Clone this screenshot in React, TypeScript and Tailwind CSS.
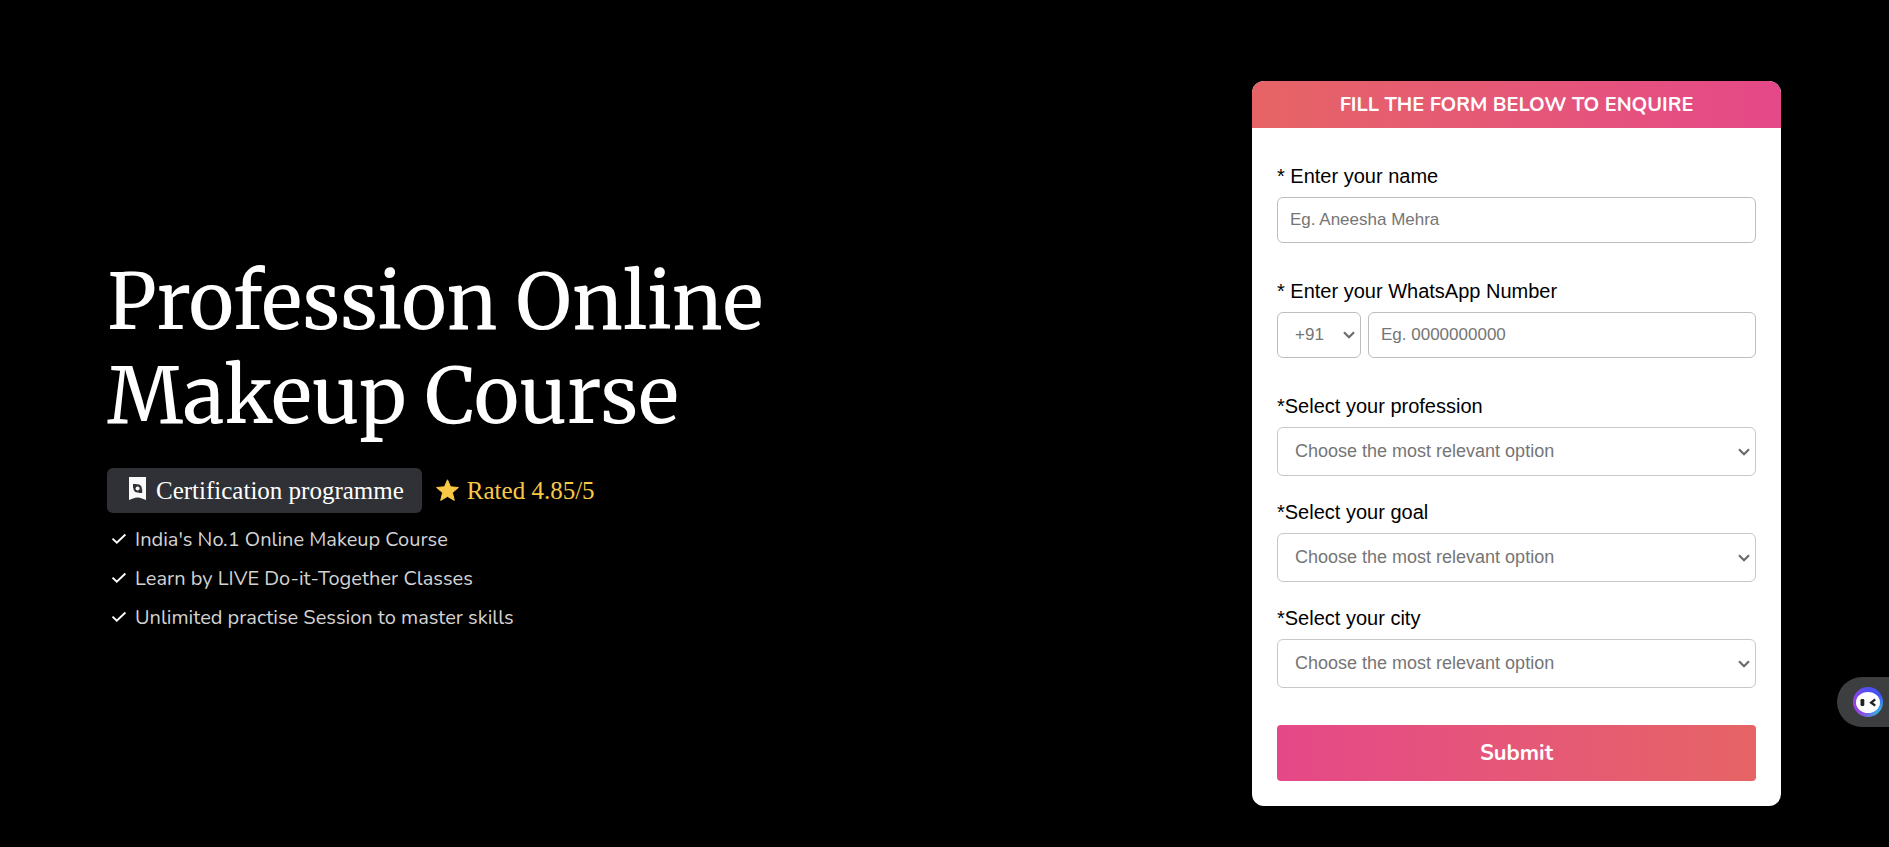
import type { ReactNode } from "react";

const benefits = [
  "India's No.1 Online Makeup Course",
  "Learn by LIVE Do-it-Together Classes",
  "Unlimited practise Session to master skills",
];

const selects = [
  { id: "profession", label: "*Select your profession", options: ["Student", "Working professional", "Makeup artist"] },
  { id: "goal", label: "*Select your goal", options: ["Start a career", "Upskill", "Self makeup"] },
  { id: "city", label: "*Select your city", options: ["Mumbai", "Delhi", "Bengaluru"] },
];

function CertificateIcon() {
  return (
    <svg aria-hidden="true" viewBox="0 0 17 23" className="mb-1 h-[23px] w-[17px] shrink-0">
      <path d="M0 0h17v23l-4-1.6a12 12 0 0 0-9 0L0 23z" fill="#fafafa" />
      <circle cx="8.600" cy="11.400" r="4.200" fill="#303136" />
      <path d="M4 6.900h4l-4 4.500zM13.200 16h-4l4-4.500z" fill="#303136" />
      <circle cx="8.600" cy="11.400" r="2" fill="#fafafa" />
    </svg>
  );
}

function StarIcon() {
  return (
    <svg aria-hidden="true" viewBox="0 0 23 22" className="h-[22px] w-[23px] shrink-0" fill="#f9c846">
      <path d="M11.500 0.800l3 7 7.900.7-6 5.200 1.900 7.700-6.800-4-6.800 4 1.900-7.700-6-5.200 7.900-.7z" stroke="#f9c846" strokeWidth="1" strokeLinejoin="round" />
    </svg>
  );
}

function CheckIcon() {
  return (
    <svg aria-hidden="true" viewBox="0 0 16 12" className="h-3 w-4 shrink-0" fill="none" stroke="#fff" strokeWidth="1.900">
      <path d="M1.500 5.600l4.300 4.200 8.600-8.300" />
    </svg>
  );
}

function Chevron() {
  return (
    <svg aria-hidden="true" viewBox="0 0 12 8" className="pointer-events-none absolute top-1/2 right-[6px] h-2 w-3 -translate-y-1/2" fill="none" stroke="#6b6b6b" strokeWidth="2.200">
      <path d="M1 1.200l5 5 5-5" />
    </svg>
  );
}

function Field({ id, label, children }: { id: string; label: string; children: ReactNode }) {
  return (
    <div className="flex flex-col gap-[7px]">
      <label htmlFor={id} className="text-[20px] leading-[28px] text-black">
        {label}
      </label>
      {children}
    </div>
  );
}

const inputClass =
  "h-[46px] w-full min-w-0 rounded-md border border-[#bdbdbd] bg-white px-3 text-[17px] text-black placeholder:text-[#757575]";

export default function App() {
  return (
    <main className="relative flex min-h-screen items-center justify-between gap-10 bg-black pt-[81px] pr-[108px] pb-[41px] pl-[107px] font-['Liberation_Sans',Arial,sans-serif]">
      <section className="max-w-[760px] pt-1">
        <h1 className="font-['Merriweather','Noto_Serif',serif] text-[77px] leading-[94px] text-white">
          Profession Online
          <br />
          Makeup Course
        </h1>
        <div className="mt-[25px] flex items-center gap-[14px] font-['Liberation_Serif','Times_New_Roman',serif] text-[25px] leading-[45px]">
          <span className="flex items-center gap-[10px] rounded-md bg-[#303136] pr-[18px] pl-[22px] text-white">
            <CertificateIcon />
            Certification programme
          </span>
          <span className="flex items-center gap-2 text-[#f9c846]">
            <StarIcon />
            Rated 4.85/5
          </span>
        </div>
        <ul className="mt-[7px] font-['Nunito','Lato',sans-serif] text-[20px] leading-[39px] text-[#d3d3d3]">
          {benefits.map((b) => (
            <li key={b} className="flex items-center gap-2 pl-1">
              <CheckIcon />
              {b}
            </li>
          ))}
        </ul>
      </section>

      <form className="w-[529px] shrink-0 overflow-hidden rounded-xl bg-white" onSubmit={(e) => e.preventDefault()}>
        <h2 className="bg-linear-to-r from-[#e66465] to-[#e54888] text-center font-['Nunito','Lato',sans-serif] text-[20px] leading-[47px] font-bold text-white">
          FILL THE FORM BELOW TO ENQUIRE
        </h2>
        <div className="flex flex-col px-[25px] pt-[34px] pb-[25px]">
          <div className="mb-[34px] flex flex-col gap-[34px]">
            <Field id="name" label="* Enter your name">
              <input id="name" type="text" placeholder="Eg. Aneesha Mehra" className={inputClass} />
            </Field>
            <Field id="phone" label="* Enter your WhatsApp Number">
              <div className="flex gap-[7px]">
                <div className="relative w-[84px] shrink-0">
                  <select aria-label="Country code" className="h-[46px] w-full appearance-none rounded-md border border-[#bdbdbd] bg-white pl-[17px] text-[17px] text-[#757575]">
                    <option>+91</option>
                    <option>+1</option>
                    <option>+44</option>
                  </select>
                  <Chevron />
                </div>
                <input id="phone" type="tel" placeholder="Eg. 0000000000" className={inputClass} />
              </div>
            </Field>
          </div>
          <div className="flex flex-col gap-[22px]">
            {selects.map((s) => (
              <Field key={s.id} id={s.id} label={s.label}>
                <div className="relative">
                  <select id={s.id} className="h-[49px] w-full appearance-none rounded-md border border-[#c8c8c8] bg-white pl-[17px] text-[18px] text-[#757575]">
                    <option>Choose the most relevant option</option>
                    {s.options.map((o) => (
                      <option key={o}>{o}</option>
                    ))}
                  </select>
                  <Chevron />
                </div>
              </Field>
            ))}
          </div>
          <button type="submit" className="mt-[37px] h-14 rounded bg-linear-to-r from-[#e54888] to-[#e66465] font-['Nunito','Lato',sans-serif] text-[22px] font-bold text-white">
            Submit
          </button>
        </div>
      </form>

      <button type="button" aria-label="Open assistant" className="absolute right-0 bottom-[120px] flex h-[50px] w-[52px] items-center rounded-l-full bg-[#3d3e40] pl-4">
        <svg aria-hidden="true" viewBox="0 0 30 30" className="h-[30px] w-[30px]">
          <defs>
            <linearGradient id="ring" x1="0.200" y1="0" x2="0.800" y2="1">
              <stop offset="0" stopColor="#5b4ff0" />
              <stop offset="0.500" stopColor="#3f52f5" />
              <stop offset="1" stopColor="#35c8e8" />
            </linearGradient>
            <linearGradient id="ringLeft" x1="0" y1="0.700" x2="0.600" y2="0.400">
              <stop offset="0" stopColor="#a63fd8" />
              <stop offset="1" stopColor="#a63fd8" stopOpacity="0" />
            </linearGradient>
          </defs>
          <circle cx="15" cy="15" r="15" fill="url(#ring)" />
          <circle cx="15" cy="15" r="15" fill="url(#ringLeft)" />
          <ellipse cx="15" cy="15.500" rx="12" ry="10.500" fill="#fff" />
          <rect x="7.500" y="12" width="3.800" height="7" rx="1.200" fill="#222" />
          <path d="M22.200 12.400l-4 3.200 4 3" fill="none" stroke="#222" strokeWidth="2.400" />
        </svg>
      </button>
    </main>
  );
}
